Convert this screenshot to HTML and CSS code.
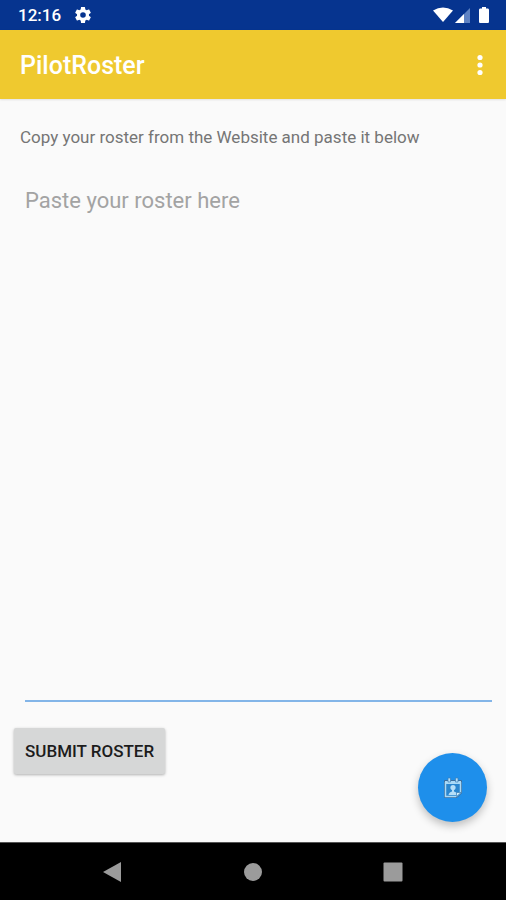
FILE: index.html
```html
<!DOCTYPE html>
<html lang="en">
<head>
<meta charset="utf-8">
<meta name="viewport" content="width=device-width, initial-scale=1">
<title>PilotRoster</title>
<link rel="stylesheet" href="styles.css">
</head>
<body>
<div class="screen">
  <div class="status-bar">
    <span class="clock">12:16</span>
    <svg class="gear" viewBox="2 2 20 20" width="16" height="16" aria-hidden="true"><path fill="#fff" fill-rule="evenodd" d="M19.43 12.98c.04-.32.07-.64.07-.98s-.03-.66-.07-.98l2.11-1.65c.19-.15.24-.42.12-.64l-2-3.46c-.12-.22-.39-.3-.61-.22l-2.49 1c-.52-.4-1.08-.73-1.69-.98l-.38-2.65A.49.49 0 0 0 14 2h-4c-.25 0-.46.18-.49.42l-.38 2.65c-.61.25-1.17.59-1.69.98l-2.49-1c-.23-.09-.49 0-.61.22l-2 3.46c-.13.22-.07.49.12.64l2.11 1.65c-.04.32-.07.65-.07.98s.03.66.07.98l-2.11 1.65c-.19.15-.24.42-.12.64l2 3.46c.12.22.39.3.61.22l2.49-1c.52.4 1.08.73 1.69.98l.38 2.65c.03.24.24.42.49.42h4c.25 0 .46-.18.49-.42l.38-2.65c.61-.25 1.17-.59 1.69-.98l2.49 1c.23.09.49 0 .61-.22l2-3.46c.12-.22.07-.49-.12-.64zM12 15.500a3.500 3.500 0 1 1 0-7 3.500 3.500 0 0 1 0 7z"/></svg>
    <svg class="signals" viewBox="0 0 58 18" width="58" height="18" aria-hidden="true">
      <path fill="#fff" d="M1 4.500Q11 -1.500 21 4.500L11 16z"/>
      <path fill="#5f83c4" d="M23 17L38 2V17z"/>
      <path fill="#fff" d="M23 17L32 8V17z"/>
      <path fill="#fff" d="M47 2.500H50V1H54V2.500H56Q57 2.500 57 4V15.500Q57 17 56 17H48Q47 17 47 15.500V4Q47 2.500 48 2.500z"/>
    </svg>
  </div>
  <header class="app-bar">
    <h1 class="title">PilotRoster</h1>
    <button class="menu" type="button" aria-label="More options">
      <svg viewBox="0 0 6 22" width="6" height="22" aria-hidden="true"><g fill="#fff"><circle cx="3" cy="3.500" r="2.600"/><circle cx="3" cy="11" r="2.600"/><circle cx="3" cy="18.500" r="2.600"/></g></svg>
    </button>
  </header>
  <main class="content">
    <label class="hint" for="roster">Copy your roster from the Website and paste it below</label>
    <textarea class="roster" id="roster" placeholder="Paste your roster here"></textarea>
    <button class="submit" type="button">SUBMIT ROSTER</button>
    <button class="fab" type="button" aria-label="Calendar">
      <svg viewBox="0 0 20 22" width="20" height="22" aria-hidden="true">
        <path d="M1.500 3.500H18.500V16L14 20.500H1.500z" fill="#2a86cf" stroke="#3c6f9e"/>
        <path d="M2.500 5V19.500H13L17.500 15.500V5" fill="none" stroke="#a9d9f7" stroke-width="1.500"/>
        <path d="M2 4H18V7H2z" fill="#a9d9f7"/>
        <path d="M5 1H7.500V5H5zM12.500 1H15V5H12.500z" fill="#b8e0f8" stroke="#3c7fb8" stroke-width=".7"/>
        <circle cx="10" cy="10.500" r="2.600" fill="#b5def8"/>
        <path d="M5.500 18Q6 15 9 14.500V12H11V14.500Q14 15 14 18z" fill="#b5def8"/>
        <path d="M13.500 19.500V15.500H18z" fill="#d4effc" stroke="#3c7fb8" stroke-width=".7"/>
      </svg>
    </button>
  </main>
  <nav class="nav-bar">
    <button class="nav-button" type="button" aria-label="Back"><svg viewBox="0 0 20 22" width="20" height="22"><path fill="#9b9b9b" d="M18 1V21L0 11z"/></svg></button>
    <button class="nav-button" type="button" aria-label="Home"><svg viewBox="0 0 20 22" width="20" height="22"><circle fill="#9b9b9b" cx="10" cy="11" r="9"/></svg></button>
    <button class="nav-button" type="button" aria-label="Recent apps"><svg viewBox="0 0 20 22" width="20" height="22"><rect fill="#9b9b9b" x=".5" y="1.500" width="19" height="19" rx="1"/></svg></button>
  </nav>
</div>
</body>
</html>
```
FILE: styles.css
```css
* {
  box-sizing: border-box;
}

body {
  margin: 0;
  font-family: Roboto, "Liberation Sans", sans-serif;
  background: #fafafa;
}

button {
  border: 0;
  padding: 0;
  background: none;
  font-family: inherit;
}

svg {
  display: block;
}

.screen {
  display: flex;
  flex-direction: column;
  min-height: 100vh;
}

.status-bar {
  display: flex;
  align-items: center;
  height: 30px;
  padding: 0 16px 0 18px;
  background: #06348f;
  color: #fff;
}

.clock {
  font-size: 17px;
  font-weight: 500;
  line-height: 32px;
}

.gear {
  margin-left: 14px;
}

.signals {
  margin-left: auto;
}

.app-bar {
  display: flex;
  align-items: center;
  justify-content: space-between;
  height: 69px;
  padding: 0 14px 0 20px;
  background: #efc92f;
  box-shadow: 0 1px 2px rgba(0, 0, 0, 0.1);
}

.title {
  margin: 0;
  padding-top: 2px;
  color: #fff;
  font-size: 25px;
  font-weight: 500;
  line-height: 32px;
}

.menu {
  display: flex;
  justify-content: center;
  width: 24px;
}

.content {
  position: relative;
  display: flex;
  flex: 1;
  flex-direction: column;
  align-items: flex-start;
  padding: 24px 14px 68px;
}

.hint {
  padding-left: 6px;
  color: #757575;
  font-size: 17px;
  line-height: 28px;
}

.roster {
  display: block;
  flex: 1;
  align-self: stretch;
  margin: 32px 0 26px 11px;
  padding: 4px 0;
  border: 0;
  border-bottom: 2px solid #83b5e8;
  border-radius: 0;
  outline: 0;
  background: transparent;
  color: #212121;
  font-family: inherit;
  font-size: 22px;
  line-height: 28px;
  resize: none;
}

.roster::placeholder {
  color: #a3a3a3;
  opacity: 1;
}

.submit {
  height: 46px;
  padding: 0 11px;
  border-radius: 2px;
  background: #d6d7d7;
  box-shadow: 0 1px 3px rgba(0, 0, 0, 0.3);
  color: #1c1c1c;
  font-size: 17px;
  font-weight: 500;
}

.fab {
  position: absolute;
  right: 19px;
  bottom: 20px;
  display: flex;
  align-items: center;
  justify-content: center;
  width: 69px;
  height: 69px;
  border-radius: 50%;
  background: #1e8feb;
  box-shadow: 0 4px 8px rgba(0, 0, 0, 0.24);
}

.nav-bar {
  display: flex;
  justify-content: center;
  gap: 120px;
  height: 58px;
  border-top: 1px solid #555;
  background: #000;
}

.nav-button {
  display: flex;
  align-items: center;
}
```
